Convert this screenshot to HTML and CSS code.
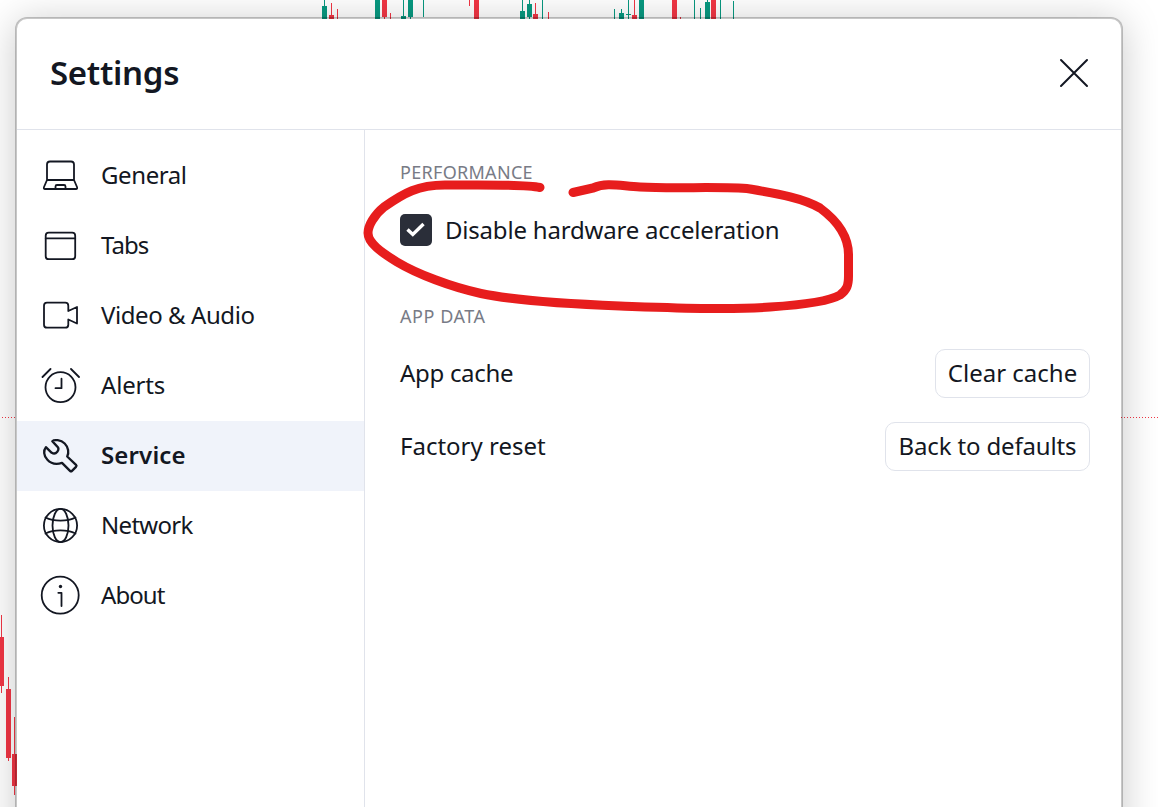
FILE: index.html
```
<!DOCTYPE html>
<html lang="en">
<head>
<meta charset="utf-8">
<title>Settings</title>
<link rel="stylesheet" href="styles.css">
</head>
<body>
<div class="screen">
<svg class="chart" viewBox="0 0 1158 807" shape-rendering="crispEdges" aria-hidden="true">
  <g fill="#089981">
    <path d="M324 0h1v6h-1zM322 6h5v13h-5zM375 0h5v19h-5zM403 0h1v16h-1zM401 16h5v3h-5zM408 0h5v17h-5zM410 17h1v2h-1zM423 0h1v17h-1z"/>
    <path d="M522 0h1v11h-1zM520 11h5v8h-5zM529 0h1v4h-1zM527 4h5v13h-5zM529 17h1v2h-1zM542 0h1v19h-1z"/>
    <path d="M614 9h1v10h-1zM621 9h1v4h-1zM619 13h5v6h-5zM628 0h1v19h-1zM626 14h5v1h-5zM639 0h5v19h-5z"/>
    <path d="M694 0h1v19h-1zM700 8h1v11h-1zM707 0h1v2h-1zM705 2h5v17h-5zM720 0h1v19h-1zM733 1h1v18h-1z"/>
  </g>
  <g fill="#f23645">
    <path d="M331 3h1v12h-1zM329 15h5v4h-5zM337 9h1v10h-1zM382 0h5v17h-5zM384 17h1v2h-1zM390 13h1v6h-1z"/>
    <path d="M469 0h1v6h-1zM474 0h5v19h-5zM535 3h1v11h-1zM533 14h5v5h-5zM548 12h1v7h-1z"/>
    <path d="M634 0h1v15h-1zM632 15h5v4h-5zM672 0h5v19h-5zM680 17h1v2h-1zM711 0h5v19h-5z"/>
    <path d="M1 615h1v78h-1zM0 637h4v49h-4zM8 677h1v84h-1zM6 689h5v69h-5zM14 717h1v78h-1zM12 754h5v32h-5z"/>
  </g>
  <path d="M2 417.500H1158" stroke="#f23645" stroke-dasharray="1 2"/>
</svg>

<main class="dialog">
  <header class="header">
    <h1 class="title">Settings</h1>
    <button class="close" aria-label="Close">
      <svg width="30" height="30" viewBox="0 0 30 30"><path d="M2 2l26 26M28 2L2 28"/></svg>
    </button>
  </header>
  <div class="body">
    <nav class="nav">
      <a class="item"><svg class="icon" viewBox="0 0 40 40"><path d="M7 25V9.500a3 3 0 0 1 3-3h21a3 3 0 0 1 3 3V25M7 25h27l3 7c.5 1.300 0 2-1 2H5c-1 0-1.500-.7-1-2zM15.500 34v-2.500a1.500 1.500 0 0 1 1.500-1.500h7a1.500 1.500 0 0 1 1.500 1.500V34"/></svg><span class="label general">General</span></a>
      <a class="item"><svg class="icon" viewBox="0 0 40 40"><rect x="5.700" y="7.700" width="29.500" height="26.500" rx="3"/><path d="M5.700 13.300h29.500"/></svg><span class="label tabs">Tabs</span></a>
      <a class="item"><svg class="icon" viewBox="0 0 40 40"><path d="M7 7.700h18.300a3 3 0 0 1 3 3V16l8.700-4v16.500L28.300 24.500v5.200a3 3 0 0 1-3 3H7a3 3 0 0 1-3-3v-19a3 3 0 0 1 3-3z"/></svg><span class="label video">Video &amp; Audio</span></a>
      <a class="item"><svg class="icon" viewBox="0 0 40 40"><circle cx="20.500" cy="22.200" r="15"/><path d="M15.500 23.200h6V13.700M2.500 12l8-8M31 4l8 8"/></svg><span class="label alerts">Alerts</span></a>
      <a class="item active"><svg class="icon wrench" viewBox="0 0 40 40"><path d="M5.900 12.200l5.800 5.600c2.300 1.300 4.300.6 5.600-1 1.600-2 1.300-4-.2-5.400L12.300 6.200c1.800-1.900 8.500-1.500 12.400 2.300 3.700 3.700 4.500 9.300 2.500 13l8.800 8.400c.7.700.7 1.300 0 2l-4 4c-.7.700-1.300.7-2 0l-8-8c-5.500 1.700-10.800 1-14.600-3.200-4-4-4-9.500-1.500-12.500z"/></svg><span class="label service">Service</span></a>
      <a class="item"><svg class="icon" viewBox="0 0 40 40"><circle cx="20.500" cy="20.500" r="16.600"/><ellipse cx="20.500" cy="20.500" rx="8" ry="16.600"/><path d="M5.500 12.500c8 4.100 22 4.100 30 0M5.500 28.500c8-4.100 22-4.100 30 0"/></svg><span class="label network">Network</span></a>
      <a class="item"><svg class="icon" viewBox="0 0 40 40"><circle cx="20.200" cy="20.200" r="18.500"/><path d="M18.300 17.800h3.200V31"/><circle class="dot" cx="20.500" cy="11.500" r="1.700"/></svg><span class="label about">About</span></a>
    </nav>
    <section class="content">
      <h2 class="heading performance">PERFORMANCE</h2>
      <label class="check">
        <span class="box"><svg width="32" height="32" viewBox="0 0 32 32"><path d="M7.500 15.500l5.300 5L23.500 10"/></svg></span>
        <span class="label hardware">Disable hardware acceleration</span>
      </label>
      <h2 class="heading data">APP DATA</h2>
      <div class="row"><span class="label cache">App cache</span><button class="button clear">Clear cache</button></div>
      <div class="row"><span class="label factory">Factory reset</span><button class="button defaults">Back to defaults</button></div>
    </section>
  </div>
</main>

<svg class="marker" viewBox="0 0 1158 807" aria-hidden="true">
  <path d="M540 187.500C525 184 485 185 445 185C418 185 404 193 384 207C374 215 368 226 368 233C368 243 381 252 397 262C417 274 451 287 481 293.500C512 300 570 304 620 306C680 308 730 310 770 307C800 305 830 301 840 295C847 290 848.500 285 848.500 276V256C849 237 839 222 820 208C803 198 779 194 750 189C725 186 675 189 640 187C620 186 607 182 593 188L573 192.500"/>
</svg>
</div>
</body>
</html>
```
FILE: styles.css
```
* { box-sizing: border-box; }
body {
  margin: 0;
  background: #fff;
  color: #131722;
  font-family: "Noto Sans", "Open Sans", sans-serif;
}
.screen {
  position: relative;
  height: 807px;
  padding: 17px 0 0 15px;
  overflow: hidden;
}
.chart, .marker {
  position: absolute;
  inset: 0;
  width: 1158px;
  height: 807px;
  pointer-events: none;
}
.marker path {
  fill: none;
  stroke: #e71d1d;
  stroke-width: 9;
  stroke-linecap: round;
  stroke-linejoin: round;
}
.dialog {
  position: relative;
  width: 1108px;
  height: 790px;
  padding: 2px 2px 0;
}
/* The window frame and its shadow continue below the visible area. */
.dialog::before {
  content: "";
  position: absolute;
  inset: 0 0 -60px;
  z-index: -1;
  border: 2px solid rgba(0, 0, 0, .22);
  border-radius: 12px;
  background: #fff;
  background-clip: padding-box;
  box-shadow: 0 4px 38px rgba(0, 0, 0, .21);
}
.dialog { isolation: isolate; }
.header {
  display: flex;
  align-items: center;
  justify-content: space-between;
  height: 111px;
  padding: 0 32px 2px 33px;
  border-bottom: 1px solid #e0e3eb;
}
.title { margin: 0; font-size: 33px; font-weight: 600; line-height: 44px; letter-spacing: -.3px; }
.close { display: flex; padding: 0; border: 0; background: none; }
.close svg { fill: none; stroke: #131722; stroke-width: 2; stroke-linecap: round; }
.body { display: flex; height: 677px; }
.nav { width: 348px; padding-top: 11px; border-right: 1px solid #e0e3eb; }
.item { display: flex; align-items: center; gap: 21px; height: 70px; padding: 0 0 2px 23px; }
.active { background: #f0f3fa; font-weight: 600; }
.icon { width: 40px; height: 40px; fill: none; stroke: #131722; stroke-width: 1.8; stroke-linejoin: round; stroke-linecap: round; }
.wrench { stroke-width: 2.3; }
.icon .dot { fill: #131722; stroke: none; }
.label { font-size: 24px; line-height: 32px; white-space: nowrap; }
.general { letter-spacing: -.4px; }
.tabs { letter-spacing: -1px; }
.video { letter-spacing: -.43px; }
.alerts { letter-spacing: -.2px; }
.service { letter-spacing: .15px; }
.network { letter-spacing: -.7px; }
.about { letter-spacing: -.95px; }
.hardware { letter-spacing: -.2px; }
.cache { letter-spacing: -.3px; }
.content { flex: 1; padding: 30px 31px 0 35px; }
.heading { margin: 0; font-size: 18px; font-weight: 400; line-height: 24px; color: #787b86; }
.performance { letter-spacing: .3px; }
.check { display: flex; align-items: center; gap: 13px; height: 32px; margin-top: 30px; }
.box { display: flex; width: 32px; height: 32px; border-radius: 5px; background: #2a2e39; }
.box path { fill: none; stroke: #fff; stroke-width: 3.4; }
.data { margin: 58px 0 21px; letter-spacing: .55px; }
.row { display: flex; align-items: center; justify-content: space-between; height: 49px; margin-bottom: 24px; }
.row .label { padding-bottom: 2px; }
.button {
  height: 49px;
  padding: 0 0 3px;
  border: 1px solid #e0e3eb;
  border-radius: 10px;
  background: #fff;
  color: #131722;
  font: 24px "Noto Sans", "Open Sans", sans-serif;
  white-space: nowrap;
}
.clear { width: 155px; }
.defaults { width: 205px; letter-spacing: -.15px; }
```
